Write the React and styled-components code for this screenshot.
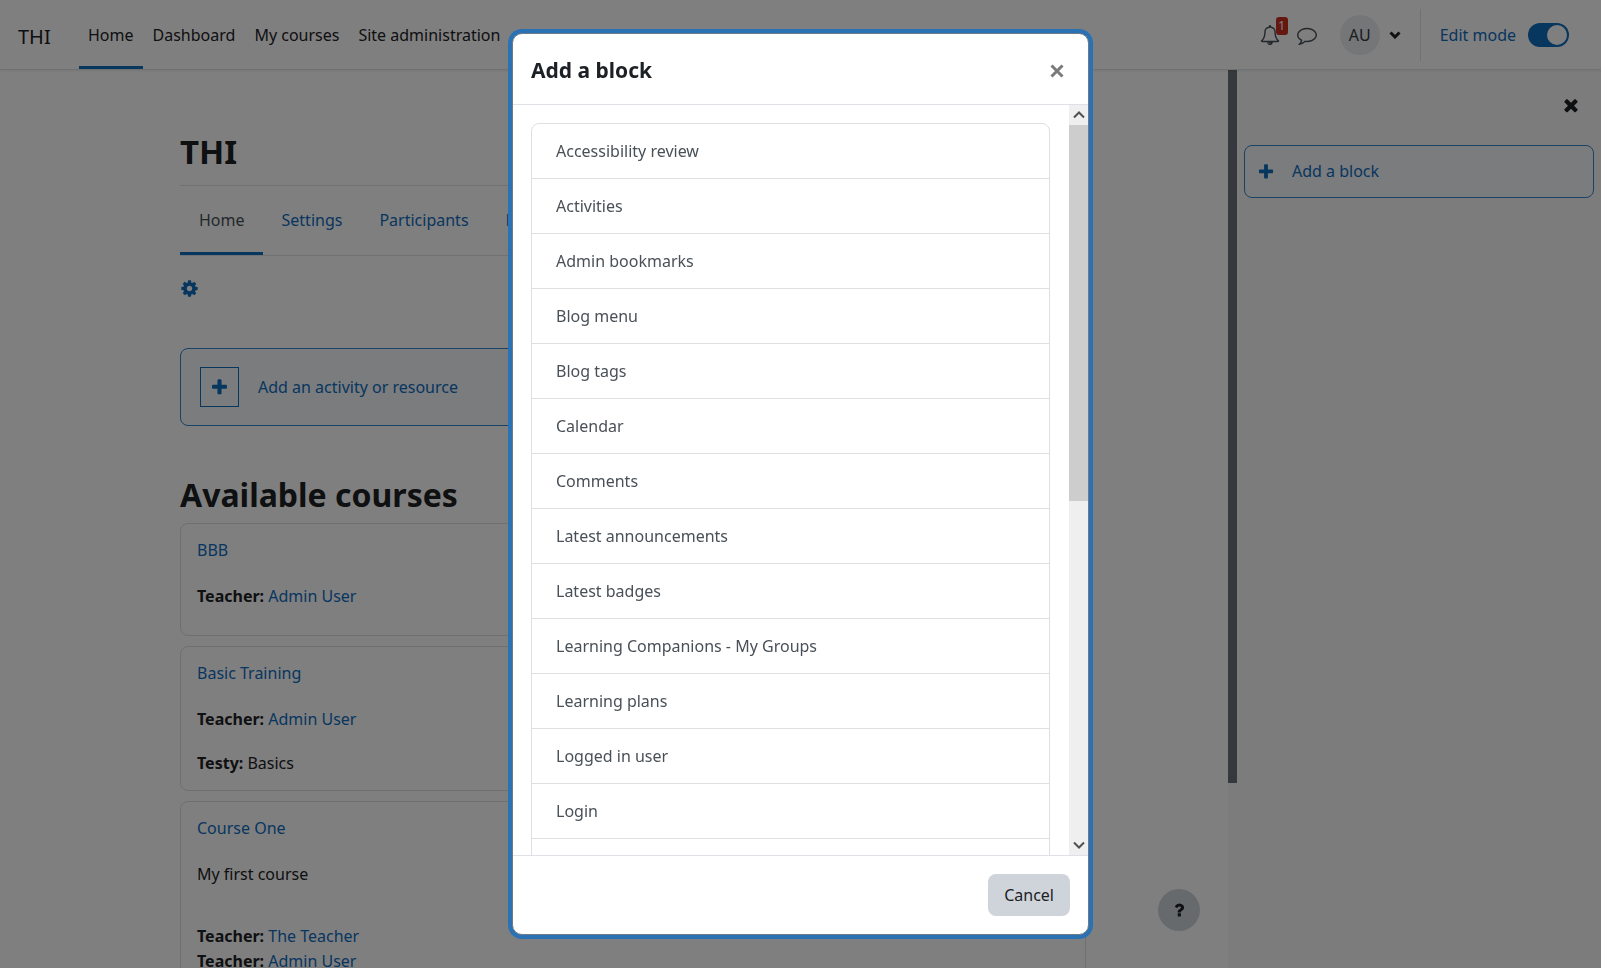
import React from "react";
import styled, { createGlobalStyle } from "styled-components";

const GlobalStyle = createGlobalStyle`
  *, *::before, *::after { box-sizing: border-box; }
  html, body { margin: 0; height: 100%; }
  body {
    overflow: hidden;
    background: #fff;
    color: #1d2125;
    font-family: "Noto Sans", "Open Sans", sans-serif;
    font-size: 16px;
    line-height: 25px;
  }
  h1, h2, h3, p, ul { margin: 0; padding: 0; }
  ul { list-style: none; }
  button { font: inherit; color: inherit; background: none; border: 0; padding: 0; cursor: pointer; }
  a { color: #0f6cbf; text-decoration: none; }
`;

/* ---------- icons ---------- */

const Glyph = styled.svg`
  display: block;
  flex: none;
  width: ${(p) => p.$size || 18}px;
  height: ${(p) => p.$size || 18}px;
  fill: currentColor;
`;

const paths = {
  bell: "M912 1696q0-16-16-16-59 0-101.500-42.500t-42.500-101.500q0-16-16-16t-16 16q0 73 51.500 124.500t124.500 51.500q16 0 16-16zM246 1408h1300q-266-300-266-832 0-51-24-105t-69-103-121.500-80.500-169.500-31.500-169.500 31.500-121.500 80.500-69 103-24 105q0 532-266 832zM1728 1408q0 52-38 90t-90 38h-448q0 106-75 181t-181 75-181-75-75-181h-448q-52 0-90-38t-38-90q50-42 91-88t85-119.500 74.500-158.500 50-206 19.500-260q0-152 117-282.500t307-158.500q-8-19-8-39 0-40 28-68t68-28 68 28 28 68q0 20-8 39 190 28 307 158.500t117 282.500q0 139 19.500 260t50 206 74.500 158.500 85 119.500 91 88z",
  comment: "M896 384q-204 0-381.500 69.500t-282 187.500-104.500 255q0 112 71.500 213.500t201.500 175.500l87 50-27 96q-24 91-70 172 152-63 275-171l43-38 57 6q69 8 130 8 204 0 381.500-69.500t282-187.500 104.500-255-104.500-255-282-187.500-381.500-69.500zM1792 896q0 174-120 321.500t-326 233-450 85.500q-70 0-145-8-198 175-460 242-49 14-114 22h-5q-15 0-27-10.500t-16-27.500v-1q-3-4-.5-12t2-10 4.500-9.500l6-9 7-8.500 8-9q7-8 31-34.500t34.500-38 31-39.500 32.500-51 27-59 26-76q-157-89-247.500-220t-90.500-281q0-174 120-321.500t326-233 450-85.500 450 85.500 326 233 120 321.500z",
  plus: "M1600 736v192q0 40-28 68t-68 28h-416v416q0 40-28 68t-68 28h-192q-40 0-68-28t-28-68v-416h-416q-40 0-68-28t-28-68v-192q0-40 28-68t68-28h416v-416q0-40 28-68t68-28h192q40 0 68 28t28 68v416h416q40 0 68 28t28 68z",
  cog: "M1152 896q0-106-75-181t-181-75-181 75-75 181 75 181 181 75 181-75 75-181zm512-109v222q0 12-8 23t-20 13l-185 28q-19 54-39 91 35 50 107 138 10 12 10 25t-9 23q-27 37-99 108t-94 71q-12 0-26-9l-138-108q-44 23-91 38-16 136-29 186-7 28-36 28h-222q-14 0-24.500-8.500t-11.500-21.500l-28-184q-49-16-90-37l-141 107q-10 9-25 9-14 0-25-11-126-114-165-168-7-10-7-23 0-12 8-23 15-21 51-66.500t54-70.500q-27-50-41-99l-183-27q-13-2-21-12.500t-8-23.500v-222q0-12 8-23t19-13l186-28q14-46 39-92-40-57-107-138-10-12-10-24 0-10 9-23 26-36 98.500-107.500t94.500-71.500q13 0 26 10l138 107q44-23 91-38 16-136 29-186 7-28 36-28h222q14 0 24.500 8.500t11.500 21.500l28 184q49 16 90 37l142-107q9-9 24-9 13 0 25 10 129 119 165 170 7 8 7 22 0 12-8 23-15 21-51 66.500t-54 70.500q26 50 41 98l183 28q13 2 21 12.500t8 23.500z",
  times: "M1490 1322q0 40-28 68l-136 136q-28 28-68 28t-68-28l-294-294-294 294q-28 28-68 28t-68-28l-136-136q-28-28-28-68t28-68l294-294-294-294q-28-28-28-68t28-68l136-136q28-28 68-28t68 28l294 294 294-294q28-28 68-28t68 28l136 136q28 28 28 68t-28 68l-294 294 294 294q28 28 28 68z",
  question: "M1088 1256v240q0 16-12 28t-28 12h-240q-16 0-28-12t-12-28v-240q0-16 12-28t28-12h240q16 0 28 12t12 28zm316-600q0 54-15.500 101t-35 76.500-55 59.500-57.500 43.500-61 35.500q-41 23-68.500 65t-27.500 67q0 17-12 32.500t-28 15.500h-240q-15 0-25.500-18.500t-10.500-37.500v-45q0-83 65-156.500t143-108.500q59-27 84-56t25-76q0-42-46.500-74t-107.500-32q-65 0-108 29-35 25-107 115-13 16-31 16-12 0-25-8l-164-125q-13-10-15.500-25t5.500-28q160-266 464-266 80 0 161 31t146 83 106 127.500 41 158.500z",
};

const Icon = ({ name, size }) => (
  <Glyph viewBox="0 0 1792 1792" $size={size} aria-hidden="true">
    <path d={paths[name]} />
  </Glyph>
);

const Chevron = styled.svg`
  display: block;
  flex: none;
  width: 12px;
  height: 8px;
  fill: none;
  stroke: currentColor;
  stroke-width: ${(p) => p.$weight || 3};
`;

/* ---------- top bar ---------- */

const Navbar = styled.header`
  display: flex;
  height: 70px;
  padding-left: 18px;
  padding-right: 32px;
  border-bottom: 1px solid #dee2e6;
  box-shadow: 0 1px 2px rgba(0, 0, 0, 0.08);
  position: relative;
`;

const Brand = styled.a`
  display: flex;
  align-items: center;
  width: 61px;
  padding-top: 3px;
  font-size: 20px;
  color: #1d2125;
`;

const NavLinks = styled.nav`
  display: flex;
  gap: 1px;
`;

const NavLink = styled.a`
  display: flex;
  align-items: center;
  padding: 5px 9px 0;
  white-space: nowrap;
  color: #1d2125;
  border-bottom: 3px solid ${(p) => (p.$active ? "#0f6cbf" : "transparent")};
`;

const NavTools = styled.div`
  display: flex;
  align-items: center;
  margin-left: auto;
  padding-top: 1px;
`;

const IconButton = styled.button`
  position: relative;
  display: flex;
  margin-right: 17px;
  color: #495057;
`;

const Badge = styled.span`
  position: absolute;
  top: -8px;
  left: 16px;
  width: 12px;
  height: 18px;
  border-radius: 3px;
  background: #ca3120;
  color: #fff;
  font-size: 12px;
  line-height: 18px;
  text-align: center;
`;

const UserMenu = styled.button`
  display: flex;
  align-items: center;
  gap: 9px;
  margin: 0 19px 0 6px;
`;

const Avatar = styled.span`
  display: flex;
  align-items: center;
  justify-content: center;
  width: 40px;
  height: 40px;
  border-radius: 50%;
  background: #e9ecef;
  color: #343a40;
`;

const EditMode = styled.label`
  display: flex;
  align-items: center;
  gap: 12px;
  height: 52px;
  padding-left: 19px;
  border-left: 1px solid #dee2e6;
  color: #0f6cbf;
`;

const Switch = styled.input`
  appearance: none;
  width: 41px;
  height: 24px;
  margin: 0;
  padding: 2px;
  border-radius: 12px;
  background: #0f6cbf;
  &::before {
    content: "";
    display: block;
    width: 20px;
    height: 20px;
    margin-left: auto;
    border-radius: 50%;
    background: #fff;
  }
`;

/* ---------- page ---------- */

const Columns = styled.div`
  display: flex;
  height: calc(100vh - 70px);
`;

const Main = styled.main`
  flex: 1;
  min-width: 0;
  padding: 60px 142px 0 180px;
  overflow: hidden;
`;

const Title = styled.h1`
  padding-bottom: 11px;
  border-bottom: 1px solid #dee2e6;
  font-size: 33px;
  line-height: 44px;
`;

const Tabs = styled.nav`
  display: flex;
  height: 70px;
  border-bottom: 1px solid #dee2e6;
`;

const Tab = styled.a`
  display: flex;
  align-items: center;
  padding: 3px 18px 0 19px;
  color: ${(p) => (p.$active ? "#495057" : "#0f6cbf")};
  border-bottom: 3px solid ${(p) => (p.$active ? "#0f6cbf" : "transparent")};
`;

const SettingsButton = styled.button`
  display: block;
  margin: 23px 0 50px;
  color: #0f6cbf;
`;

const AddActivity = styled.button`
  display: flex;
  align-items: center;
  gap: 19px;
  width: 100%;
  height: 78px;
  padding: 0 19px;
  border: 1px solid #3584c9;
  border-radius: 8px;
  background: #f5f9fc;
  color: #0f6cbf;
`;

const PlusBox = styled.span`
  display: flex;
  align-items: center;
  justify-content: center;
  width: 39px;
  height: 40px;
  border: 1px solid #0f6cbf;
`;

const SectionTitle = styled.h2`
  margin: 47px 0 6px;
  font-size: 32px;
  line-height: 44px;
`;

const CourseCard = styled.article`
  margin-bottom: 10px;
  padding: 14px 16px;
  border: 1px solid #dfdfdf;
  border-radius: 8px;
`;

const CourseName = styled.h3`
  margin-bottom: 21px;
  font-size: 16px;
  font-weight: 400;
`;

const CourseText = styled.p`
  margin-bottom: 37px;
`;

const CourseFacts = styled.div`
  padding-bottom: ${(p) => (p.$spaced ? 19 : 12)}px;
`;

const Drawer = styled.aside`
  display: flex;
  width: 373px;
  background: #f8f9fa;
`;

const DrawerBar = styled.div`
  width: 9px;
  height: calc(100% - 185px);
  background: #6a737b;
`;

const DrawerContent = styled.div`
  display: flex;
  flex-direction: column;
  flex: 1;
  padding: 25px 7px;
`;

const DrawerClose = styled.button`
  align-self: flex-end;
  margin: 0 13px 30px 0;
`;

const AddBlock = styled.button`
  display: flex;
  align-items: center;
  gap: 17px;
  height: 53px;
  padding: 0 12px;
  border: 1px solid #3584c9;
  border-radius: 8px;
  background: #f5f9fc;
  color: #0f6cbf;
`;

const HelpButton = styled.button`
  position: fixed;
  right: 401px;
  bottom: 37px;
  display: flex;
  align-items: center;
  justify-content: center;
  width: 42px;
  height: 42px;
  border-radius: 50%;
  background: #ced4da;
`;

/* ---------- dialog ---------- */

const Backdrop = styled.div`
  position: fixed;
  inset: 0;
  display: flex;
  justify-content: center;
  align-items: center;
  background: rgba(0, 0, 0, 0.5);
`;

const Dialog = styled.section`
  display: flex;
  flex-direction: column;
  width: 577px;
  height: calc(100vh - 66px);
  border: 1px solid #6f7a85;
  border-radius: 10px;
  background: #fff;
  box-shadow: 0 0 0 4px #2a72b4;
  overflow: hidden;
`;

const DialogHeader = styled.div`
  display: flex;
  align-items: center;
  justify-content: space-between;
  height: 71px;
  padding: 2px 21px 0 18px;
  border-bottom: 1px solid #dee2e6;
`;

const DialogTitle = styled.h2`
  font-size: 21px;
  line-height: 30px;
`;

const CloseButton = styled.button`
  padding-top: 2px;
  color: #7a7a7a;
`;

const CloseMark = styled.svg`
  display: block;
  width: 20px;
  height: 20px;
  stroke: currentColor;
  stroke-width: 3;
`;

const DialogBody = styled.div`
  display: flex;
  flex: 1;
  min-height: 0;
`;

const ListArea = styled.div`
  flex: 1;
  padding: 18px 19px 0 18px;
  overflow: hidden;
`;

const BlockList = styled.ul`
  border: 1px solid #dfdfdf;
  border-radius: 8px;
`;

const BlockItem = styled.li`
  height: 55px;
  border-bottom: 1px solid #dfdfdf;
`;

const BlockLink = styled.a`
  display: flex;
  align-items: center;
  height: 100%;
  padding: 1px 24px 0;
  color: #495057;
`;

const ScrollBar = styled.div`
  display: flex;
  flex-direction: column;
  justify-content: space-between;
  width: 19px;
  background: #efefef;
  color: #505050;
`;

const ScrollArrow = styled.div`
  display: flex;
  align-items: center;
  justify-content: center;
  height: 20px;
`;

const ScrollTrack = styled.div`
  flex: 1;
`;

const ScrollThumb = styled.div`
  height: 53%;
  background: #cdcdcd;
`;

const DialogFooter = styled.div`
  display: flex;
  align-items: center;
  justify-content: flex-end;
  height: 79px;
  padding: 0 18px;
  border-top: 1px solid #dee2e6;
`;

const CancelButton = styled.button`
  height: 42px;
  padding: 1px 16px 0;
  border-radius: 8px;
  background: #ced4da;
  color: #1d2125;
`;

const navItems = ["Home", "Dashboard", "My courses", "Site administration"];
const tabItems = ["Home", "Settings", "Participants", "Reports"];
const courses = [
  { name: "BBB", facts: [["Teacher", "Admin User"]] },
  { name: "Basic Training", facts: [["Teacher", "Admin User"]], field: ["Testy", "Basics"] },
  { name: "Course One", text: "My first course", facts: [["Teacher", "The Teacher"], ["Teacher", "Admin User"]] },
];
const blocks = [
  "Accessibility review", "Activities", "Admin bookmarks", "Blog menu", "Blog tags",
  "Calendar", "Comments", "Latest announcements", "Latest badges",
  "Learning Companions - My Groups", "Learning plans", "Logged in user", "Login",
];

const Course = ({ name, text, facts, field }) => (
  <CourseCard>
    <CourseName><a href="#course">{name}</a></CourseName>
    {text && <CourseText>{text}</CourseText>}
    <CourseFacts $spaced={Boolean(field)}>
      {facts.map(([role, person]) => (
        <p key={person}><strong>{role}:</strong> <a href="#user">{person}</a></p>
      ))}
    </CourseFacts>
    {field && <p><strong>{field[0]}:</strong> {field[1]}</p>}
  </CourseCard>
);

export default function App() {
  return (
    <>
      <GlobalStyle />
      <Navbar>
        <Brand href="#home">THI</Brand>
        <NavLinks>
          {navItems.map((item, i) => (
            <NavLink key={item} href="#nav" $active={i === 0}>{item}</NavLink>
          ))}
        </NavLinks>
        <NavTools>
          <IconButton aria-label="Notifications">
            <Icon name="bell" size={20} />
            <Badge>1</Badge>
          </IconButton>
          <IconButton aria-label="Messages"><Icon name="comment" size={20} /></IconButton>
          <UserMenu aria-label="User menu">
            <Avatar>AU</Avatar>
            <Chevron viewBox="0 0 12 8"><path d="M1.500 1.500 6 6l4.500-4.500" /></Chevron>
          </UserMenu>
          <EditMode>
            Edit mode
            <Switch type="checkbox" role="switch" defaultChecked />
          </EditMode>
        </NavTools>
      </Navbar>

      <Columns>
        <Main>
          <Title>THI</Title>
          <Tabs>
            {tabItems.map((item, i) => (
              <Tab key={item} href="#tab" $active={i === 0}>{item}</Tab>
            ))}
          </Tabs>
          <SettingsButton aria-label="Settings"><Icon name="cog" size={19} /></SettingsButton>
          <AddActivity>
            <PlusBox><Icon name="plus" size={19} /></PlusBox>
            Add an activity or resource
          </AddActivity>
          <SectionTitle>Available courses</SectionTitle>
          {courses.map((course) => <Course key={course.name} {...course} />)}
        </Main>
        <Drawer>
          <DrawerBar />
          <DrawerContent>
            <DrawerClose aria-label="Close block drawer"><Icon name="times" size={20} /></DrawerClose>
            <AddBlock><Icon name="plus" />Add a block</AddBlock>
          </DrawerContent>
        </Drawer>
      </Columns>
      <HelpButton aria-label="Help"><Icon name="question" size={18} /></HelpButton>

      <Backdrop>
        <Dialog role="dialog" aria-modal="true" aria-labelledby="dialog-title">
          <DialogHeader>
            <DialogTitle id="dialog-title">Add a block</DialogTitle>
            <CloseButton aria-label="Close">
              <CloseMark viewBox="0 0 20 20"><path d="M4.500 4.500l11 11M15.500 4.500l-11 11" /></CloseMark>
            </CloseButton>
          </DialogHeader>
          <DialogBody>
            <ListArea>
              <BlockList>
                {blocks.map((name) => (
                  <BlockItem key={name}><BlockLink href="#block">{name}</BlockLink></BlockItem>
                ))}
                <BlockItem />
              </BlockList>
            </ListArea>
            <ScrollBar aria-hidden="true">
              <ScrollArrow><Chevron viewBox="0 0 12 8" $weight={2}><path d="M1 6.500l5-5 5 5" /></Chevron></ScrollArrow>
              <ScrollTrack><ScrollThumb /></ScrollTrack>
              <ScrollArrow><Chevron viewBox="0 0 12 8" $weight={2}><path d="M1 1.500l5 5 5-5" /></Chevron></ScrollArrow>
            </ScrollBar>
          </DialogBody>
          <DialogFooter>
            <CancelButton>Cancel</CancelButton>
          </DialogFooter>
        </Dialog>
      </Backdrop>
    </>
  );
}
